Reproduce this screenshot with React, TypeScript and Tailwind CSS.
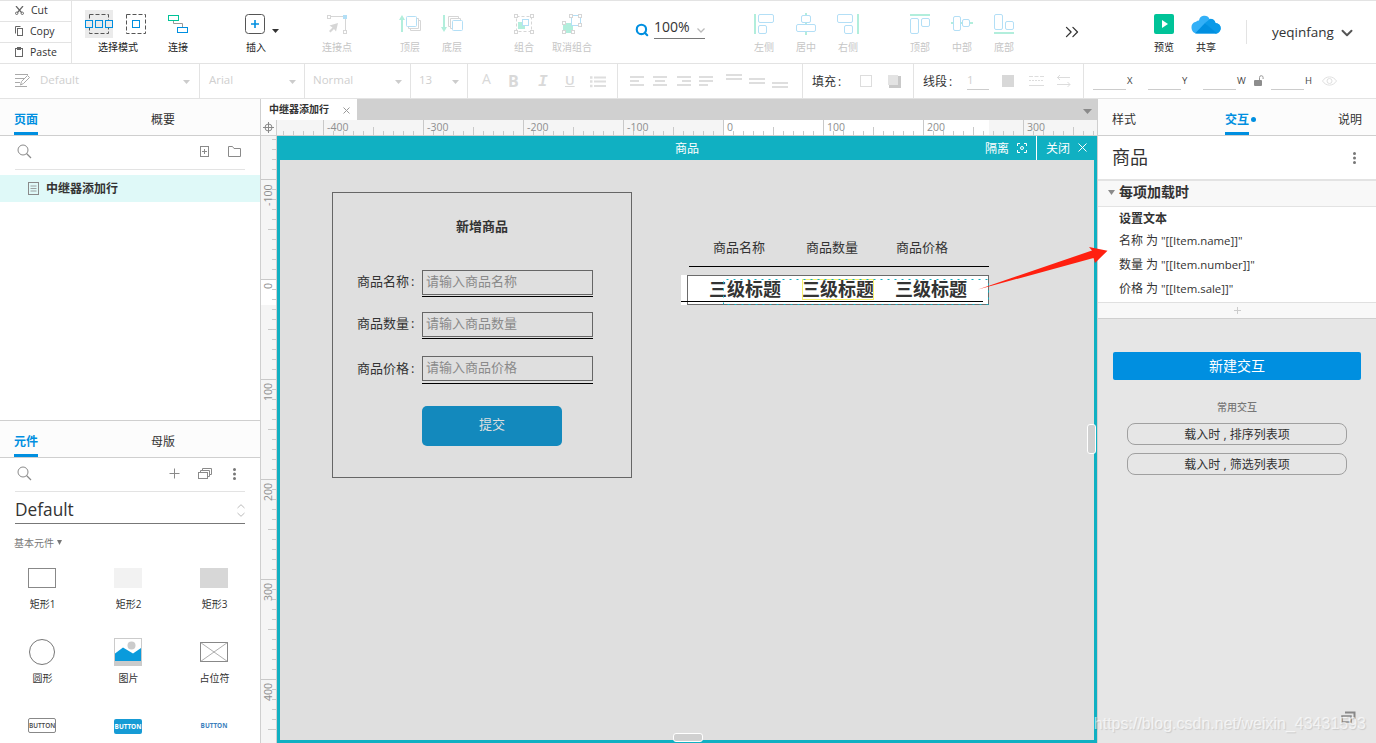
import type { ReactNode } from 'react'
import { ChevronDown, ChevronsRight, Search } from 'lucide-react'

const BLUE = '#008fe0'
const PALE = '#b3dff6'
const MINT = '#b2eedc'
const SILVER = '#d6d6d6'

type IconProps = { w: number; h: number; className?: string; children: ReactNode }

function Icon({ w, h, className = '', children }: IconProps) {
  return (
    <svg width={w} height={h} viewBox={`0 0 ${w} ${h}`} fill="none" className={`block shrink-0 ${className}`}>
      {children}
    </svg>
  )
}

function Caret({ className = 'text-[#bdbdbd]' }: { className?: string }) {
  return (
    <Icon w={7} h={4} className={className}>
      <path d="M0 0h7L3.500 4z" fill="currentColor" />
    </Icon>
  )
}

type ToolProps = { label: string; icon: ReactNode; active?: boolean; className?: string }

function Tool({ label, icon, active = false, className = '' }: ToolProps) {
  return (
    <div className={`flex w-[42px] shrink-0 flex-col items-center pt-[7px] ${className}`}>
      <div className="flex h-8 items-center justify-center">{icon}</div>
      <span className={`text-[10px] leading-[15px] whitespace-nowrap ${active ? 'text-[#222]' : 'text-[#c6c6c6]'}`}>
        {label}
      </span>
    </div>
  )
}

const handle = (x: number, y: number) => <rect x={x} y={y} width="3" height="3" fill="#fff" stroke={SILVER} />

const icons = {
  connect: (
    <Icon w={20} h={20}>
      <path d="M5.500 6.500v3h9v4" stroke="#999" />
      <rect x="0.500" y="1.500" width="10" height="5" stroke="#00c398" />
      <rect x="9.500" y="13.500" width="10" height="5" stroke={BLUE} />
    </Icon>
  ),
  insert: (
    <Icon w={20} h={20} className="mr-0.5">
      <rect x="0.500" y="0.500" width="19" height="19" rx="3" stroke="#555" />
      <path d="M10 6v8M6 10h8" stroke={BLUE} strokeWidth="1.600" />
    </Icon>
  ),
  point: (
    <Icon w={20} h={20}>
      <path d="M3 2.500h14M18.500 4v12" stroke={SILVER} />
      <rect x="0.500" y="1.500" width="3" height="3" stroke={SILVER} />
      <rect x="16" y="1" width="4" height="4" fill={PALE} />
      <rect x="16.500" y="16.500" width="3" height="3" fill="#fff" stroke={SILVER} />
      <path d="M11 9l-8.500 2.500 3 2-3.500 3.500 1.500 1.500 3.500-3.500 2 2.500z" fill={SILVER} />
    </Icon>
  ),
  front: (
    <Icon w={22} h={20}>
      <path d="M3 18V5" stroke={MINT} strokeWidth="2" />
      <path d="M0 6l3-5 3 5z" fill={MINT} />
      <path d="M19 6.500h2.500V16.500H11.500V14M17 4.500h2.500v10H9.500v-2" stroke={SILVER} />
      <rect x="7.500" y="2.500" width="10" height="10" rx="1" fill="#fff" stroke={PALE} />
    </Icon>
  ),
  back: (
    <Icon w={22} h={20}>
      <path d="M3 1v13" stroke={MINT} strokeWidth="2" />
      <path d="M0 13l3 5 3-5z" fill={MINT} />
      <path d="M9 12.500H7.500V2.500H17.500V4M11 14.500H9.500V4.500H19.500V6" stroke={SILVER} />
      <rect x="11.500" y="6.500" width="10" height="10" rx="1" fill="#fff" stroke={PALE} />
    </Icon>
  ),
  group: (
    <Icon w={20} h={20}>
      <rect x="2.500" y="2.500" width="15" height="15" stroke={SILVER} strokeDasharray="3 2" />
      {handle(0.5, 0.5)}
      {handle(16.5, 0.5)}
      {handle(0.5, 16.5)}
      {handle(16.5, 16.5)}
      <rect x="4" y="8" width="7" height="7" fill={MINT} />
      <rect x="8.500" y="5.500" width="6" height="6" fill="#fff" stroke={PALE} />
    </Icon>
  ),
  ungroup: (
    <Icon w={20} h={20}>
      <rect x="1" y="9" width="10" height="10" fill={MINT} />
      <rect x="9.500" y="1.500" width="9" height="10" fill="#fff" stroke={PALE} />
      {handle(0.5, 7.5)}
      {handle(0.5, 16.5)}
      {handle(9.5, 16.5)}
      {handle(7.5, 0.5)}
      {handle(16.5, 0.5)}
      {handle(16.5, 9.5)}
    </Icon>
  ),
  left: (
    <Icon w={20} h={20}>
      <path d="M1 0v20" stroke={MINT} strokeWidth="2" />
      <rect x="4.500" y="0.500" width="15" height="8" rx="1.500" stroke={PALE} />
      <rect x="4.500" y="11.500" width="8" height="8" rx="1.500" stroke={PALE} />
    </Icon>
  ),
  center: (
    <Icon w={20} h={22}>
      <path d="M10 0v22" stroke={MINT} strokeWidth="2" />
      <rect x="5.500" y="2.500" width="9" height="7" rx="1.500" fill="#fff" stroke={PALE} />
      <rect x="0.500" y="11.500" width="19" height="7" rx="1.500" fill="#fff" stroke={PALE} />
    </Icon>
  ),
  right: (
    <Icon w={22} h={20}>
      <path d="M21 0v20" stroke={MINT} strokeWidth="2" />
      <rect x="0.500" y="0.500" width="15" height="8" rx="1.500" stroke={PALE} />
      <rect x="7.500" y="11.500" width="8" height="8" rx="1.500" stroke={PALE} />
    </Icon>
  ),
  top: (
    <Icon w={20} h={20}>
      <path d="M0 1h20" stroke={MINT} strokeWidth="2" />
      <rect x="0.500" y="4.500" width="8" height="15" rx="1.500" stroke={PALE} />
      <rect x="11.500" y="4.500" width="8" height="8" rx="1.500" stroke={PALE} />
    </Icon>
  ),
  middle: (
    <Icon w={22} h={20}>
      <path d="M0 9h22" stroke={MINT} strokeWidth="2" />
      <rect x="2.500" y="2.500" width="7" height="14" rx="1.500" fill="#fff" stroke={PALE} />
      <rect x="11.500" y="5.500" width="7" height="7" rx="1.500" fill="#fff" stroke={PALE} />
    </Icon>
  ),
  bottom: (
    <Icon w={20} h={20}>
      <path d="M0 19h20" stroke={MINT} strokeWidth="2" />
      <rect x="0.500" y="0.500" width="8" height="15" rx="1.500" stroke={PALE} />
      <rect x="11.500" y="7.500" width="8" height="8" rx="1.500" stroke={PALE} />
    </Icon>
  ),
  preview: (
    <Icon w={20} h={20}>
      <rect width="20" height="20" rx="2" fill="#00c398" />
      <path d="M8 6l6 4-6 4z" fill="#fff" />
    </Icon>
  ),
  share: (
    <Icon w={30} h={20}>
      <path d="M6 19.500a6 6 0 0 1-1-11.800 5 5 0 0 1 3-1.200 5.500 5.500 0 0 1 10.500-1.500 5 5 0 0 1 6 4 5 5 0 0 1 0 10.500z" fill="#33b0f7" />
      <path d="M14 9l5-4a5 5 0 0 1 5.500 4 5.200 5.200 0 0 1 0 10.500z" fill="#0a9ae8" />
      <path d="M4 19.500L14 9l12 10.500z" fill="#008fe0" />
    </Icon>
  ),
}

function MainToolbar() {
  return (
    <div className="flex h-16 shrink-0 border-t border-b border-[#e3e3e3]">
      <div className="flex w-[72px] shrink-0 flex-col border-r border-[#e3e3e3] text-[10.5px] leading-[18px] text-[#333]">
        <div className="flex h-5 items-center pb-0.5 pl-[15px]">
          <Icon w={9} h={9}>
            <path d="M1 0l5.500 6.500M8 0L2.500 6.500" stroke="#666" strokeWidth="1.200" />
            <circle cx="1.700" cy="7.300" r="1.200" stroke="#666" />
            <circle cx="7.300" cy="7.300" r="1.200" stroke="#666" />
          </Icon>
          <span className="ml-[7px]">Cut</span>
        </div>
        <div className="flex h-[21px] items-center border-t border-[#e3e3e3] pb-0.5 pl-[15px]">
          <Icon w={8} h={10}>
            <path d="M0.500 7.500v-7h5" stroke="#666" />
            <rect x="2.500" y="2.500" width="5" height="7" stroke="#666" />
          </Icon>
          <span className="ml-[7px]">Copy</span>
        </div>
        <div className="flex h-5 items-center border-t border-[#e3e3e3] pb-px pl-[15px]">
          <Icon w={8} h={10}>
            <rect x="0.500" y="1.500" width="7" height="8" stroke="#666" />
            <path d="M2 0h4v3H2z" fill="#666" />
          </Icon>
          <span className="ml-[7px]">Paste</span>
        </div>
      </div>

      <div className="flex w-[85px] shrink-0 flex-col items-center pt-[7px] pl-[7px]">
        <div className="mr-1 flex h-8 items-center gap-3">
          <Icon w={28} h={28} className="bg-[#ebebeb]">
            <rect x="4.500" y="4.500" width="19" height="19" stroke="#555" strokeDasharray="4 2" />
            <g fill="#ebebeb" stroke={BLUE}>
              <rect x="0.500" y="10.500" width="7" height="7" />
              <rect x="10.500" y="10.500" width="7" height="7" />
              <rect x="20.500" y="10.500" width="7" height="7" />
            </g>
          </Icon>
          <Icon w={22} h={20}>
            <rect x="1.500" y="0.500" width="19" height="19" stroke="#555" strokeDasharray="4 2" />
            <rect x="7.500" y="6.500" width="7" height="7" stroke={BLUE} />
          </Icon>
        </div>
        <span className="text-[10px] leading-[15px] text-[#222]">选择模式</span>
      </div>
      <Tool label="连接" icon={icons.connect} active />
      <div className="flex">
        <Tool label="插入" icon={icons.insert} active className="ml-9" />
        <Caret className="mt-7 -ml-[5px] text-[#333]" />
      </div>
      <Tool label="连接点" icon={icons.point} className="ml-[37px]" />
      <Tool label="顶层" icon={icons.front} className="ml-[31px]" />
      <Tool label="底层" icon={icons.back} />
      <Tool label="组合" icon={icons.group} className="ml-[30px]" />
      <Tool label="取消组合" icon={icons.ungroup} className="ml-1.5" />

      <div className="ml-[42px] flex w-[71px] shrink-0 pt-4">
        <Search size={14} strokeWidth={3.6} color={BLUE} className="mt-1.5" />
        <div className="ml-[5px] flex h-[22px] w-[51px] items-center justify-between border-b border-[#777] pb-0.5 text-[14px] text-[#333]">
          100%
          <Icon w={8} h={5} className="mt-2">
            <path d="M0.500 0.500L4 4 7.500 0.500" stroke="#bbb" strokeWidth="1.300" />
          </Icon>
        </div>
      </div>

      <Tool label="左侧" icon={icons.left} className="ml-[37px]" />
      <Tool label="居中" icon={icons.center} />
      <Tool label="右侧" icon={icons.right} />
      <Tool label="顶部" icon={icons.top} className="ml-[30px]" />
      <Tool label="中部" icon={icons.middle} />
      <Tool label="底部" icon={icons.bottom} />
      <ChevronsRight size={22} strokeWidth={1.4} color="#333" className="mt-5 ml-9 shrink-0" />
      <Tool label="预览" icon={icons.preview} active className="ml-[60px]" />
      <Tool label="共享" icon={icons.share} active />
      <div className="mt-[19px] ml-[19px] h-6 w-px bg-[#e3e3e3]" />
      <span className="mt-5 ml-[25px] w-[63px] text-[13.5px] leading-[22px] text-[#333]">yeqinfang</span>
      <ChevronDown size={18} strokeWidth={2.6} color="#555" className="mt-[23px] ml-[3px] shrink-0" />
    </div>
  )
}

// one bar per line, given as [x, y, width]
function Bars({ w, h, rows, className }: { w: number; h: number; rows: number[][]; className?: string }) {
  return (
    <Icon w={w} h={h} className={className}>
      {rows.map(([x, y, width]) => (
        <rect key={y} x={x} y={y} width={width} height="2" fill="#dedede" />
      ))}
    </Icon>
  )
}

function Coord({ label, className }: { label: string; className: string }) {
  return (
    <div className={`flex items-end ${className}`}>
      <div className="h-px w-[33px] bg-[#ccc]" />
      <span className="mb-0.5 ml-px text-[9.5px] leading-[14px] text-[#444]">{label}</span>
    </div>
  )
}

function FormatBar() {
  return (
    <div className="flex h-[35px] shrink-0 items-stretch border-b border-[#e3e3e3] text-[11.5px] text-[#cfcfcf]">
      <div className="flex w-[200px] items-center border-r border-[#e3e3e3] pb-[3px] pl-[15px]">
        <Icon w={16} h={14} className="mt-0.5">
          <path d="M0 0.500h13M0 4.500h9M0 8.500h5M0 12.500h12" stroke="#aaa" />
          <path d="M5.500 11l1-3.500 6-6 2 2-6 6z" fill="#fff" stroke="#aaa" />
        </Icon>
        <span className="ml-[9px]">Default</span>
        <Caret className="mt-1 mr-[9px] ml-auto text-[#ccc]" />
      </div>
      <div className="flex w-[105px] items-center justify-between border-r border-[#e3e3e3] pr-2 pb-[3px] pl-[9px]">
        Arial
        <Caret className="mt-1 text-[#ccc]" />
      </div>
      <div className="flex w-[106px] items-center justify-between border-r border-[#e3e3e3] pr-2 pb-[3px] pl-2">
        Normal
        <Caret className="mt-1 text-[#ccc]" />
      </div>
      <div className="flex w-[57px] items-center justify-between border-r border-[#e3e3e3] pr-2 pb-[3px] pl-2">
        13
        <Caret className="mt-1 text-[#ccc]" />
      </div>
      <div className="flex w-[150px] items-center border-r border-[#e3e3e3] pl-3.5 text-[15px] leading-none text-[#d9d9d9]">
        <span className="mb-1 w-[26px] text-[14px]">A</span>
        <span className="w-[28px] text-[16px] font-bold">B</span>
        <span className="mt-0.5 w-[29px] pl-0.5 font-['Liberation_Mono',monospace] text-[16px] font-bold italic">I</span>
        <span className="mb-px w-[25px] text-[13px] font-semibold underline">U</span>
        <Icon w={16} h={12} className="mt-0.5">
          <path d="M4 1.500h12M4 5.500h12M4 10h12" stroke="#dedede" strokeWidth="2" />
          <path d="M0 1.500h2.500M0 5.500h2.500M0 10h2.500" stroke="#dedede" strokeWidth="2.500" />
        </Icon>
      </div>
      <div className="flex w-[185px] items-center border-r border-[#e3e3e3] pl-3">
        <Bars w={14} h={10} rows={[[0, 0, 14], [0, 4, 9], [0, 8, 14]]} />
        <Bars w={14} h={10} rows={[[0, 0, 14], [2, 4, 10], [0, 8, 14]]} className="ml-[9px]" />
        <Bars w={14} h={10} rows={[[0, 0, 14], [5, 4, 9], [0, 8, 14]]} className="ml-2.5" />
        <Bars w={14} h={10} rows={[[0, 0, 14], [0, 4, 14], [0, 8, 9]]} className="ml-2" />
        <Bars w={16} h={14} rows={[[0, 0, 16], [0, 4, 16]]} className="ml-[13px]" />
        <Bars w={16} h={14} rows={[[0, 4, 16], [0, 8, 16]]} className="ml-[7px]" />
        <Bars w={16} h={14} rows={[[0, 8, 16], [0, 12, 16]]} className="ml-[7px]" />
      </div>
      <div className="flex w-[111px] items-center border-r border-[#e3e3e3] pl-[9px]">
        <span className="mt-px w-12 text-[12px] text-[#333]">
          填充<span className="ml-0.5">:</span>
        </span>
        <div className="h-3 w-3 border border-[#ddd]" />
        <Icon w={13} h={13} className="ml-4">
          <rect x="1" y="1" width="12" height="12" fill="#c9c9c9" />
          <rect width="10" height="10" fill="#e3e3e3" />
        </Icon>
      </div>
      <div className="flex w-[170px] items-center border-r border-[#e3e3e3] pl-[9px]">
        <span className="mt-px w-[44px] text-[12px] text-[#333]">
          线段<span className="ml-0.5">:</span>
        </span>
        <span className="mb-1 h-[22px] w-[22px] border-b border-[#ccc] pt-1 leading-[16px]">1</span>
        <div className="ml-[13px] h-3 w-3 bg-[#d8d8d8]" />
        <Icon w={15} h={12} className="ml-[15px]">
          <path d="M0 1.500h15" stroke="#ddd" strokeDasharray="4 1.500" />
          <path d="M0 5.500h15" stroke="#ddd" strokeDasharray="2 1" />
          <path d="M0 10.500h15" stroke="#ddd" />
        </Icon>
        <Icon w={14} h={12} className="ml-[13px]">
          <path d="M0 2.500h13M3 0L0.500 2.500 3 5M0 9.500h13M10.500 7l2.500 2.500-2.500 2.500" stroke="#dcdcdc" />
        </Icon>
      </div>
      <div className="flex items-end pb-2">
        <Coord label="X" className="ml-[9px] w-[55px]" />
        <Coord label="Y" className="w-[55px]" />
        <Coord label="W" className="w-[51px]" />
        <Icon w={10} h={12} className="mb-[3px]">
          <rect y="5" width="8" height="6" rx="1" fill="#8d8d8d" />
          <path d="M5.500 5V2.500a1.800 1.800 0 0 1 3.600 0V4" stroke="#999" />
        </Icon>
        <Coord label="H" className="ml-[7px] w-[51px]" />
        <Icon w={15} h={10} className="mb-1">
          <path d="M0.500 5C4-0.500 11-0.500 14.500 5 11 10.500 4 10.500 0.500 5z" stroke="#e0e0e0" />
          <circle cx="7.500" cy="5" r="2.500" stroke="#e0e0e0" />
        </Icon>
      </div>
    </div>
  )
}

function PanelTabs({ active, other }: { active: string; other: string }) {
  return (
    <div className="flex h-[37px] shrink-0 border-b border-[#cfcfcf] bg-[#fcfcfc] pl-3.5 text-[12px] leading-[41px] text-[#333]">
      <span className="h-9 w-6 border-b-[3px] border-[#008fe0] font-bold whitespace-nowrap text-[#008fe0]">{active}</span>
      <span className="ml-[113px]">{other}</span>
    </div>
  )
}

function Magnifier() {
  return (
    <Icon w={15} h={15}>
      <circle cx="6" cy="6" r="5" stroke="#8a8a8a" />
      <path d="M9.500 9.500l4.500 4.500" stroke="#8a8a8a" strokeWidth="1.200" />
    </Icon>
  )
}

function Dots() {
  return (
    <Icon w={3} h={12}>
      <circle cx="1.500" cy="1.500" r="1.500" fill="#777" />
      <circle cx="1.500" cy="6" r="1.500" fill="#777" />
      <circle cx="1.500" cy="10.500" r="1.500" fill="#777" />
    </Icon>
  )
}

const widgets = [
  { name: '矩形1', art: <div className="h-5 w-7 border border-[#888]" /> },
  { name: '矩形2', art: <div className="h-5 w-7 bg-[#f2f2f2]" /> },
  { name: '矩形3', art: <div className="h-5 w-7 bg-[#d7d7d7]" /> },
  { name: '圆形', art: <div className="h-[26px] w-[26px] rounded-full border border-[#777]" /> },
  {
    name: '图片',
    art: (
      <Icon w={28} h={28}>
        <rect x="0.500" y="0.500" width="27" height="27" fill="#fff" stroke="#cbcbcb" />
        <circle cx="17.500" cy="7.500" r="4" fill="#cbcbcb" />
        <path d="M1 15.500l8-6 10 6 8-5.500v13H1z" fill="#0a9bdc" />
        <rect y="23" width="28" height="5" fill="#cbcbcb" />
      </Icon>
    ),
  },
  {
    name: '占位符',
    art: (
      <Icon w={28} h={20}>
        <rect x="0.500" y="0.500" width="27" height="19" stroke="#888" />
        <path d="M0.500 0.500l27 19M27.500 0.500l-27 19" stroke="#999" strokeWidth="0.800" />
      </Icon>
    ),
  },
]

function LeftPanel() {
  return (
    <div className="flex w-[261px] shrink-0 flex-col border-r border-[#cfcfcf] bg-white">
      <div className="h-[321px] shrink-0">
        <PanelTabs active="页面" other="概要" />
        <div className="mx-[15px] flex h-[34px] items-center border-b border-[#e3e3e3] pr-[3px] pb-0.5 pl-0.5">
          <Magnifier />
          <Icon w={9} h={11} className="ml-[168px]">
            <rect x="0.500" y="0.500" width="8" height="10" stroke="#8a8a8a" />
            <path d="M4.500 3v5M2 5.500h5" stroke="#8a8a8a" />
          </Icon>
          <Icon w={13} h={11} className="ml-[19px]">
            <path d="M0.500 10.500v-10h4l1.500 2h6.500v8z" stroke="#8a8a8a" />
          </Icon>
        </div>
        <div className="mt-[5px] flex h-[27px] items-center bg-[#dff9f8] pl-7">
          <Icon w={11} h={13}>
            <rect x="0.500" y="0.500" width="10" height="12" stroke="#8a8a8a" />
            <path d="M2.500 4h6M2.500 6.500h6M2.500 9h6" stroke="#8a8a8a" strokeWidth="0.800" />
          </Icon>
          <span className="ml-[7px] text-[12px] leading-6 font-bold text-[#333]">中继器添加行</span>
        </div>
      </div>

      <div className="min-h-0 flex-1 border-t border-[#cfcfcf]">
        <PanelTabs active="元件" other="母版" />
        <div className="mx-[15px] flex h-[34px] items-center border-b border-[#e3e3e3] pb-0.5 pl-0.5">
          <Magnifier />
          <Icon w={11} h={11} className="ml-[137px]">
            <path d="M5.500 0.500v10M0.500 5.500h10" stroke="#8a8a8a" />
          </Icon>
          <Icon w={14} h={12} className="mr-[21px] ml-[18px]">
            <path d="M2.500 4.500v-2h9v6h-2M4.500 2.500v-2h9v6h-2" stroke="#8a8a8a" />
            <rect x="0.500" y="4.500" width="9" height="6" stroke="#8a8a8a" />
          </Icon>
          <Dots />
        </div>
        <div className="mx-[15px] flex h-8 items-center justify-between border-b border-[#777] pt-1">
          <span className="text-[17.3px] leading-6 text-[#333]">Default</span>
          <Icon w={8} h={13} className="mt-0.5">
            <path d="M0.500 4L4 0.700 7.500 4M0.500 9L4 12.300 7.500 9" stroke="#bbb" />
          </Icon>
        </div>
        <div className="mt-3 flex h-[14px] items-center pl-3.5 text-[10px] text-[#777]">
          基本元件
          <Icon w={5} h={5} className="mb-0.5 ml-[3px]">
            <path d="M0 0h5L2.500 5z" fill="#777" />
          </Icon>
        </div>
        <div className="mt-px grid grid-cols-[84px_88px_84px]">
          {widgets.map((widget) => (
            <div key={widget.name} className="flex h-[74px] flex-col items-center text-[#333]">
              <div className="flex h-[46px] items-center pt-2">{widget.art}</div>
              <span className="ml-px text-[10px] leading-[15px]">{widget.name}</span>
            </div>
          ))}
        </div>
        <div className="grid grid-cols-[84px_88px_84px] justify-items-center pt-[19px] text-[6.4px] leading-[15px] font-bold">
          <div className="h-[15px] w-7 rounded-[2px] border border-[#888] text-center leading-[13px] font-semibold text-[#444]">BUTTON</div>
          <div className="mt-px h-[15px] w-7 rounded-[2px] bg-[#169bd5] text-center text-white">BUTTON</div>
          <div className="w-7 text-center text-[#3b7fbd]">BUTTON</div>
        </div>
      </div>
    </div>
  )
}

function HorizontalRuler() {
  const ticks = Array.from({ length: 82 }, (_, i) => i * 10 - 440)
  return (
    <svg width="820" height="15" className="block">
      <rect width="820" height="15" fill="#f5f5f5" />
      <rect x="447" width="265" height="15" fill="#fff" />
      {ticks.map((t) => {
        const len = t % 100 === 0 ? 15 : t % 50 === 0 ? 8 : 4
        return <rect key={t} x={t + 446} y={15 - len} width="1" height={len} fill="#c9c9c9" />
      })}
      {[-400, -300, -200, -100, 0, 100, 200, 300].map((t) => (
        <text key={t} x={t + 450} y="11" fontSize="10.500" fill="#8f8f8f">
          {t}
        </text>
      ))}
    </svg>
  )
}

function VerticalRuler() {
  const ticks = Array.from({ length: 60 }, (_, i) => i * 10 - 140)
  const labels = [
    [-100, 206],
    [0, 289],
    [100, 401],
    [200, 501],
    [300, 601],
    [400, 701],
  ]
  return (
    <svg width="15" height="607" className="block">
      <rect width="15" height="607" fill="#f5f5f5" />
      <rect y="144" width="15" height="25" fill="#fff" />
      {ticks.map((t) => {
        const len = t % 100 === 0 ? 15 : t % 50 === 0 ? 8 : 4
        return <rect key={t} x={15 - len} y={t + 143} width={len} height="1" fill="#c9c9c9" />
      })}
      {labels.map(([t, y]) => (
        <text key={t} transform={`translate(11 ${y - 136}) rotate(-90)`} fontSize="10.500" fill="#8f8f8f">
          {t}
        </text>
      ))}
    </svg>
  )
}

const fields = [
  { label: '商品名称', row: 'h-[27px] leading-[22px]', line: 'mt-px' },
  { label: '商品数量', row: 'mt-[15px] h-[27px] leading-[22px]', line: 'mt-px' },
  { label: '商品价格', row: 'mt-[17px] h-[28px] leading-6', line: 'mt-0.5' },
]

function ProductForm() {
  return (
    <div className="absolute top-8 left-[52px] h-[286px] w-[300px] border border-[#666] pl-6 text-[13px] text-[#333]">
      <div className="mt-6 -ml-6 text-center leading-[18px] font-bold">新增商品</div>
      <div className="mt-[35px]">
        {fields.map((field) => (
          <div key={field.label} className={`flex ${field.row}`}>
            <span className="w-[65px]">
              {field.label}
              <span className="ml-0.5">:</span>
            </span>
            <div className="w-[171px]">
              <div className="h-[25px] border border-[#666] pl-[3px] leading-5 text-[#8a8a8a]">请输入{field.label}</div>
              <div className={`h-px bg-black ${field.line}`} />
            </div>
          </div>
        ))}
      </div>
      <div className="mt-[22px] ml-[65px] h-10 w-[140px] rounded-[5px] bg-[#1389bd] text-center leading-9 text-[#dfdfdf]">提交</div>
    </div>
  )
}

function Repeater() {
  return (
    <>
      <div className="absolute top-[77px] left-[409px] flex h-[30px] w-[300px] border-b border-black pl-6 text-[13px] leading-5 text-[#333]">
        <span className="w-[93px]">商品名称</span>
        <span className="w-[90px]">商品数量</span>
        <span>商品价格</span>
      </div>
      <div className="absolute top-[115px] left-[401px] flex h-[30px] w-[308px] items-start bg-white pl-7 text-[18px] leading-7 font-bold text-[#333]">
        <span className="w-[93px]">三级标题</span>
        <span className="w-[93px]">三级标题</span>
        <span>三级标题</span>
      </div>
      <svg className="absolute top-[115px] left-[401px]" width="308" height="30" fill="none">
        <rect x="6.500" y="0.500" width="301" height="29" stroke="#6b6b6b" />
        <rect x="121.500" y="4.500" width="71" height="20" stroke="#f7f06b" />
        <path d="M42.500 29.500v-25h265v25z" stroke="#10b0c2" strokeDasharray="2 5" />
        <path d="M0 26.500h302" stroke="#000" />
      </svg>
    </>
  )
}

function CanvasArea() {
  return (
    <div className="flex min-w-0 flex-1 flex-col">
      <div className="flex h-[21px] shrink-0 justify-between bg-[#d0d0d0]">
        <div className="flex w-24 items-center bg-white pb-0.5 pl-2 text-[10px] leading-[18px] font-bold text-[#333]">
          中继器添加行
          <Icon w={7} h={7} className="mt-1 ml-3.5">
            <path d="M0.500 0.500l6 6M6.500 0.500l-6 6" stroke="#999" />
          </Icon>
        </div>
        <Icon w={9} h={5} className="mt-2.5 mr-[5px]">
          <path d="M0 0h9L4.500 5z" fill="#8a8a8a" />
        </Icon>
      </div>
      <div className="flex h-4 shrink-0 border-b border-[#cfcfcf]">
        <div className="flex w-4 shrink-0 justify-center border-r border-[#cfcfcf] bg-[#fafafa] pt-0.5">
          <Icon w={11} h={11}>
            <circle cx="5.500" cy="5.500" r="3.500" stroke="#888" />
            <path d="M5.500 0v11M0 5.500h11" stroke="#888" />
          </Icon>
        </div>
        <HorizontalRuler />
      </div>
      <div className="flex min-h-0 flex-1">
        <div className="w-4 shrink-0 border-r border-[#cfcfcf]">
          <VerticalRuler />
        </div>
        <div className="flex min-w-0 flex-1 flex-col">
          <div className="flex h-6 shrink-0 bg-[#10b0c2] text-[12px] leading-[26px] text-white">
            <span className="w-[708px] pl-[398px]">商品</span>
            <span>隔离</span>
            <Icon w={10} h={10} className="mt-[7px] ml-2">
              <path d="M0.500 3v-2.500h2.500M7 0.500h2.500v2.500M9.500 7v2.500h-2.500M3 9.500h-2.500v-2.500" stroke="#fff" />
              <circle cx="5" cy="5" r="1.500" stroke="#fff" />
            </Icon>
            <div className="ml-[9px] w-px bg-white" />
            <span className="ml-[9px]">关闭</span>
            <Icon w={9} h={9} className="mt-[7px] ml-2">
              <path d="M0.500 0.500l8 8M8.500 0.500l-8 8" stroke="#fff" />
            </Icon>
          </div>
          <div className="relative flex-1 border-x-[3px] border-b-[3px] border-[#10b0c2] bg-[#dfdfdf]">
            <ProductForm />
            <Repeater />
            <div className="absolute top-[264px] left-[807px] h-[30px] w-[9px] rounded-[3px] border border-white bg-[#d0d0d0]" />
            <div className="absolute top-[573px] left-[393px] h-[9px] w-[30px] rounded-[3px] border border-white bg-[#d0d0d0]" />
            <svg className="absolute top-[80px] left-[690px] z-10" width="140" height="60">
              <path d="M8 49.500L122 10.500 119 7l18.500 3.700L125 23l-1.500-5z" fill="#ff2010" />
            </svg>
          </div>
        </div>
      </div>
    </div>
  )
}

const assignments = [
  { name: '名称', value: '"[[Item.name]]"' },
  { name: '数量', value: '"[[Item.number]]"' },
  { name: '价格', value: '"[[Item.sale]]"' },
]

function RightPanel() {
  return (
    <div className="relative flex w-[279px] shrink-0 flex-col border-l border-[#cfcfcf] bg-[#e6e6e6] text-[#333]">
      <div className="flex h-[37px] shrink-0 border-b border-[#cfcfcf] bg-[#fcfcfc] pl-3.5 text-[12px] leading-[41px]">
        <span className="w-[113px]">样式</span>
        <span className="h-9 w-6 border-b-[3px] border-[#008fe0] font-bold text-[#008fe0]">交互</span>
        <span className="mt-[18px] ml-0.5 h-[5px] w-[5px] rounded-full bg-[#008fe0]" />
        <span className="ml-[82px]">说明</span>
      </div>
      <div className="flex h-[43px] shrink-0 items-center justify-between bg-white pr-5 pl-3.5">
        <span className="text-[18px]">商品</span>
        <Dots />
      </div>
      <div className="flex h-7 shrink-0 items-center border-t-2 border-b border-[#e3e3e3] bg-[#f8f8f8] pb-0.5 pl-2.5">
        <Icon w={7} h={5}>
          <path d="M0 0h7L3.500 5z" fill="#8a8a8a" />
        </Icon>
        <span className="mb-0.5 ml-1 text-[14px] leading-5 font-bold">每项加载时</span>
      </div>
      <div className="h-[95px] shrink-0 bg-white pl-[21px] text-[12px]">
        <div className="h-[22px] leading-[23px] font-bold">设置文本</div>
        {assignments.map((item) => (
          <div key={item.name} className="flex h-6 items-center">
            {item.name}
            <span className="mx-[3px]">为</span>
            <span className="text-[11.4px]">{item.value}</span>
          </div>
        ))}
      </div>
      <div className="flex h-[17px] shrink-0 items-center justify-center border-t border-b border-t-[#e0e0e0] border-b-[#cfcfcf] bg-[#f8f8f8]">
        <Icon w={7} h={7}>
          <path d="M3.500 0v7M0 3.500h7" stroke="#ccc" />
        </Icon>
      </div>
      <div className="mt-[33px] ml-[15px] h-7 w-[248px] rounded-[2px] bg-[#008fe0] text-center text-[14px] leading-7 text-white">新建交互</div>
      <div className="mt-5 text-center text-[10px] leading-[15px] font-medium text-[#777]">常用交互</div>
      <div className="mt-2 ml-[29px] flex w-[220px] flex-col gap-2 text-center text-[12px] leading-[21px]">
        <div className="h-[22px] rounded-[8px] border border-[#a0a0a0]">载入时 , 排序列表项</div>
        <div className="h-[22px] rounded-[8px] border border-[#a0a0a0]">载入时 , 筛选列表项</div>
      </div>
      <Icon w={15} h={12} className="mt-auto mb-5 ml-[243px]">
        <path d="M4 1.500h9.500v6.500" stroke="#888" strokeWidth="2" />
        <rect x="1" y="5" width="9" height="6" stroke="#888" strokeWidth="1.500" />
      </Icon>
      <div className="absolute right-2.5 bottom-[9px] font-['Liberation_Sans',sans-serif] text-[16px] leading-5 whitespace-nowrap text-white/65 [text-shadow:1px_1px_1px_rgba(0,0,0,0.12)]">
        https://blog.csdn.net/weixin_43431593
      </div>
    </div>
  )
}

export default function App() {
  return (
    <div className="flex h-[743px] w-[1376px] flex-col overflow-hidden bg-white font-[family-name:'Open_Sans','Noto_Sans_CJK_SC',sans-serif]">
      <MainToolbar />
      <FormatBar />
      <div className="flex min-h-0 flex-1">
        <LeftPanel />
        <CanvasArea />
        <RightPanel />
      </div>
    </div>
  )
}
